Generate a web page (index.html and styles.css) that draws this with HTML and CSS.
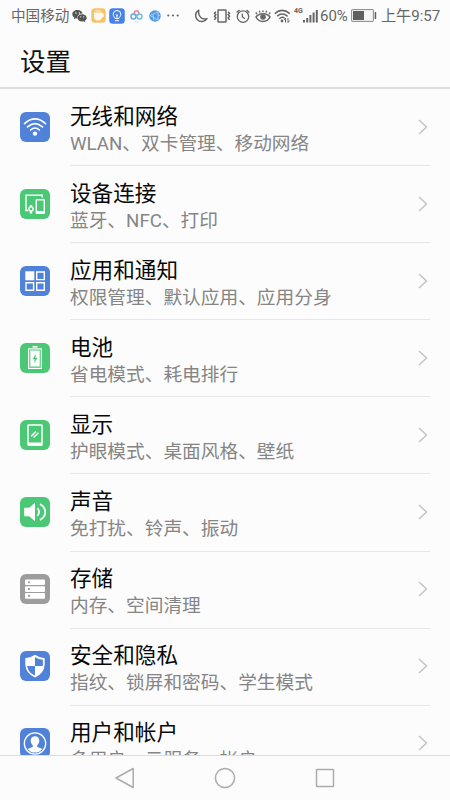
FILE: index.html
```html
<!DOCTYPE html>
<html lang="zh-CN">
<head>
<meta charset="utf-8">
<title>设置</title>
<link rel="stylesheet" href="styles.css">
</head>
<body>
<div class="phone">
  <div class="status">
    <div class="status-left">
      <span class="carrier">中国移动</span>
      <svg class="wechat" width="15" height="14" viewBox="0 0 15 14"><path fill="#555" d="M5.600 1C2.500 1 .3 2.900.3 5.200c0 1.400.8 2.500 2 3.300L1.800 10.200l2-1c.5.1 1.100.2 1.800.2C5 6.700 7 4.600 10.700 4.600 10.200 2.500 8.100 1 5.600 1Z"/><path fill="#555" d="M10.100 5.300c-2.600 0-4.500 1.600-4.500 3.600s1.900 3.600 4.500 3.600c.5 0 1-.1 1.500-.2l1.700.9-.4-1.500c1.100-.7 1.800-1.700 1.800-2.800 0-2-2-3.600-4.600-3.600Z"/><g fill="#fff"><circle cx="3.900" cy="4" r=".7"/><circle cx="7.400" cy="4" r=".7"/><circle cx="8.700" cy="7.800" r=".6"/><circle cx="11.700" cy="7.800" r=".6"/></g></svg>
      <svg class="cup" width="15" height="15" viewBox="0 0 15 15"><rect x=".3" y=".3" width="14.400" height="14.400" rx="3.500" fill="#f5c469"/><path fill="#fffaf0" d="M3 4.500h8v1h.8a1 1 0 0 1 1 1v1.700a1 1 0 0 1-1 1H11c-.3 2-1.700 3.300-4 3.300s-4-1.600-4-4Z"/><path d="M4.500 2.900h5" stroke="#fff3d5"/></svg>
      <svg class="bulb" width="16" height="16" viewBox="0 0 16 16"><rect x=".2" y=".2" width="15.600" height="15.600" rx="3.500" fill="#4583e8"/><path d="M6 10.500c0-1.300-1.800-2-1.800-4.200a3.800 3.800 0 0 1 7.600 0c0 2.200-1.800 2.900-1.800 4.200ZM6 12.700h4M8 10V7M6.800 6.500 8 7.500l1.200-1" fill="none" stroke="#fff" stroke-width="1"/></svg>
      <svg class="knot" width="13" height="14" viewBox="0 0 13 14"><g fill="none" stroke-width="1.500"><circle cx="6.500" cy="4" r="2.300" stroke="#e4889c"/><circle cx="3.500" cy="7.400" r="2.500" stroke="#66a5e3"/><circle cx="9.500" cy="7.400" r="2.500" stroke="#68c4dc"/></g><path d="M4 13h5" stroke="#ddd"/></svg>
      <svg class="globe" width="12" height="12" viewBox="0 0 12 12"><circle cx="6" cy="6" r="5.800" fill="#4f9be4"/><path d="M1 5.500 9 2v8L1 5.500M4 4.500l1 6M9 5l2.500 1" fill="none" stroke="#b9dbf7" stroke-width=".8"/></svg>
      <svg class="dots" width="12" height="3" viewBox="0 0 12 3"><g fill="#666"><circle cx="1.300" cy="1.500" r="1.100"/><circle cx="6" cy="1.500" r="1.100"/><circle cx="10.700" cy="1.500" r="1.100"/></g></svg>
    </div>
    <div class="status-right">
      <svg class="moon" width="14" height="14" viewBox="0 0 14 14"><path d="M4.800 1.200A6.100 6.100 0 1 0 13 9.700C8 11.300 3.500 7 4.800 1.200Z" fill="none" stroke="#666" stroke-width="1.500" stroke-linejoin="round"/></svg>
      <svg class="vibrate" width="18" height="14" viewBox="0 0 18 14"><g fill="none" stroke="#666" stroke-width="1.500"><rect x="5" y="1" width="8" height="12" rx=".6"/><path d="M2.800 2.800 1.500 4.300 2.800 5.800 1.500 7.300l1.300 1.500-1.300 2M15.200 2.800l1.300 1.500-1.300 1.500 1.300 1.500-1.300 1.500 1.300 2"/></g></svg>
      <svg class="alarm" width="14" height="14" viewBox="0 0 14 14"><g fill="none" stroke="#666" stroke-width="1.300"><circle cx="7" cy="7.600" r="5.700"/><path d="M.6 3.500 3.500.9M13.400 3.500 10.500.9M6.300 4.500v3.300l2.500 2"/></g></svg>
      <svg class="eye" width="16" height="14" viewBox="0 0 16 14"><path d="M1 8c3-4.500 11-4.500 14 0-3 6-11 6-14 0ZM2 5 .8 3.500M5 3.500 4.300 1.800M11 3.500l.7-1.700M14 5l1.200-1.500M8 3V1.500" fill="none" stroke="#666" stroke-width="1.500"/><circle cx="8" cy="8" r="2.800" fill="#666"/></svg>
      <svg class="wifi" width="17" height="14" viewBox="0 0 17 14"><g fill="none" stroke="#666" stroke-width="1.500"><path d="M.8 4.600Q8 -1.800 15.800 4.600M3 7.300Q8.200 2.800 13.600 7.300M5.300 9.800Q8.200 7.200 10.500 9"/></g><circle cx="8" cy="12" r="1.400" fill="#666"/><path d="m10 11 1.500-2v4.500M15.500 11.500 14 13.500V9" fill="none" stroke="#666"/></svg>
      <span class="net">4G</span>
      <svg class="signal" width="15" height="14" viewBox="0 0 15 14"><path fill="#666" d="M0 11h2v2.500H0ZM3.200 9h2v4.500h-2ZM6.400 6h2v7.500h-2ZM9.600 3.500h2v10h-2ZM12.800 1h2v12.500h-2Z"/></svg>
      <span class="percent">60%</span>
      <svg class="battery" width="26" height="13" viewBox="0 0 26 13"><rect x=".6" y=".6" width="21.800" height="11.800" rx=".5" fill="#f4f4f4" stroke="#888"/><path fill="#5f5f5f" d="M2 2h11v9H2ZM23.700 3h1.500v7h-1.500Z"/></svg>
      <span class="clock">上午9:57</span>
    </div>
  </div>
  <header class="header"><h1>设置</h1></header>
  <main class="list">
    <section class="row">
      <svg class="icon" viewBox="0 0 30 30"><rect class="blue" width="30" height="30" rx="6"/><g fill="none" stroke="#fff" stroke-width="1.600" stroke-linecap="round"><path d="M4.500 11.600Q15 2.300 25.500 11.600M7.500 14.900Q15 8.200 22.500 14.900M10.600 18Q15 14 19.400 18"/></g><circle cx="15" cy="21.600" r="2.200" fill="#fff"/></svg>
      <div class="body"><div class="text"><h2>无线和网络</h2><p>WLAN、双卡管理、移动网络</p></div><svg class="chevron" viewBox="0 0 10 16"><path d="m1 1 7.500 7L1 15"/></svg></div>
    </section>
    <section class="row">
      <svg class="icon" viewBox="0 0 30 30"><rect class="green" width="30" height="30" rx="6"/><g fill="none" stroke="#fff" stroke-width="1.400"><path d="M8.200 21.500H6V6.300h16.300v2.200"/><rect x="16.300" y="10.800" width="8" height="13.400" rx=".5"/><circle cx="11" cy="20" r="2.100"/></g><path d="M9.800 16h2.400v2H9.800ZM9.800 22h2.400v2.500H9.800ZM16.300 22h8v2.500h-8Z" fill="#fff"/></svg>
      <div class="body"><div class="text"><h2>设备连接</h2><p>蓝牙、NFC、打印</p></div><svg class="chevron" viewBox="0 0 10 16"><path d="m1 1 7.500 7L1 15"/></svg></div>
    </section>
    <section class="row">
      <svg class="icon" viewBox="0 0 30 30"><rect class="blue" width="30" height="30" rx="6"/><path fill="#fff" d="M5.300 5.300h9v9h-9Z"/><path d="M16.700 6h7.600v7.600h-7.600ZM6 16.700h7.600v7.600H6ZM16.700 16.700h7.600v7.600h-7.600Z" fill="none" stroke="#fff" stroke-width="1.400"/></svg>
      <div class="body"><div class="text"><h2>应用和通知</h2><p>权限管理、默认应用、应用分身</p></div><svg class="chevron" viewBox="0 0 10 16"><path d="m1 1 7.500 7L1 15"/></svg></div>
    </section>
    <section class="row">
      <svg class="icon" viewBox="0 0 30 30"><rect class="green" width="30" height="30" rx="6"/><path d="M12.500 3.800h5" stroke="#fff" stroke-width="1.600"/><rect x="8.600" y="5.900" width="12.800" height="19.500" fill="none" stroke="#fff" stroke-width="1.200"/><path fill="#fff" d="M10.300 7.600h9.400v16h-9.400Z"/><path class="green" d="m16 10.800-3.500 5.500h2.200l-.6 4 3.500-5.500h-2.200Z"/></svg>
      <div class="body"><div class="text"><h2>电池</h2><p>省电模式、耗电排行</p></div><svg class="chevron" viewBox="0 0 10 16"><path d="m1 1 7.500 7L1 15"/></svg></div>
    </section>
    <section class="row">
      <svg class="icon" viewBox="0 0 30 30"><rect class="green" width="30" height="30" rx="6"/><rect x="8" y="4.900" width="14" height="20.200" rx=".7" fill="none" stroke="#fff" stroke-width="1.500"/><path fill="#fff" d="M8 22.500h14V26H8Z"/><path d="m11.200 16.200 4.600-4.600M13.600 17.500l4.800-4.800" stroke="#fff" stroke-width="1.400"/></svg>
      <div class="body"><div class="text"><h2>显示</h2><p>护眼模式、桌面风格、壁纸</p></div><svg class="chevron" viewBox="0 0 10 16"><path d="m1 1 7.500 7L1 15"/></svg></div>
    </section>
    <section class="row">
      <svg class="icon" viewBox="0 0 30 30"><rect class="green" width="30" height="30" rx="6"/><path fill="#fff" d="M4.200 10.800h5L15 5.800v18.400l-5.800-5h-5Z"/><path d="M17.300 11.200q3.600 3.800 0 7.600M20 7c7 4 7 12 0 16" fill="none" stroke="#fff" stroke-width="1.700"/></svg>
      <div class="body"><div class="text"><h2>声音</h2><p>免打扰、铃声、振动</p></div><svg class="chevron" viewBox="0 0 10 16"><path d="m1 1 7.500 7L1 15"/></svg></div>
    </section>
    <section class="row">
      <svg class="icon" viewBox="0 0 30 30"><rect class="gray" width="30" height="30" rx="6"/><g fill="#fff"><rect x="5" y="5.500" width="20" height="5.600" rx="1"/><rect x="5" y="12.300" width="20" height="5.600" rx="1"/><rect x="5" y="19.100" width="20" height="5.600" rx="1"/></g><g class="gray"><circle cx="9" cy="8.300" r="1.100"/><circle cx="9" cy="15.100" r="1.100"/><circle cx="9" cy="21.900" r="1.100"/></g></svg>
      <div class="body"><div class="text"><h2>存储</h2><p>内存、空间清理</p></div><svg class="chevron" viewBox="0 0 10 16"><path d="m1 1 7.500 7L1 15"/></svg></div>
    </section>
    <section class="row">
      <svg class="icon" viewBox="0 0 30 30"><rect class="blue" width="30" height="30" rx="6"/><path fill="#fff" d="M15 3.800Q19.500 7 24.700 7.200V13.500Q24.200 22.500 15 26.500 5.800 22.500 5.300 13.500V7.200Q10.500 7 15 3.800Z"/><path class="blue" d="M15 15H7.100Q8 21.500 15 24.500ZM15 15V6Q18.500 8.500 22.900 8.800V13.500L22.700 15Z"/></svg>
      <div class="body"><div class="text"><h2>安全和隐私</h2><p>指纹、锁屏和密码、学生模式</p></div><svg class="chevron" viewBox="0 0 10 16"><path d="m1 1 7.500 7L1 15"/></svg></div>
    </section>
    <section class="row">
      <svg class="icon" viewBox="0 0 30 30"><rect class="blue" width="30" height="30" rx="6"/><circle cx="15" cy="15.500" r="10.700" fill="none" stroke="#fff" stroke-width="1.300"/><path fill="#fff" d="M15 8.200c-2.700 0-4.300 1.800-4.300 4.300 0 2 .8 3.700 2.100 4.700v1.500c-1 .9-3 1.200-5 2.200 1.600 2.300 4.300 3.700 7.200 3.700s5.600-1.400 7.200-3.700c-2-1-4-1.300-5-2.200v-1.500c1.300-1 2.100-2.700 2.100-4.700 0-2.500-1.600-4.300-4.300-4.300Z"/></svg>
      <div class="body"><div class="text"><h2>用户和帐户</h2><p>多用户、云服务、帐户</p></div><svg class="chevron" viewBox="0 0 10 16"><path d="m1 1 7.500 7L1 15"/></svg></div>
    </section>
  </main>
  <nav class="nav">
    <svg viewBox="0 0 22 22"><path d="M19.200 1.500v19L2 11Z"/></svg>
    <svg viewBox="0 0 22 22"><circle cx="11" cy="11" r="9.600"/></svg>
    <svg viewBox="0 0 22 22"><rect x="2.500" y="2.500" width="17" height="17" rx=".5"/></svg>
  </nav>
</div>
</body>
</html>
```
FILE: styles.css
```css
* { box-sizing: border-box; margin: 0; }

body {
  background: #fcfcfc;
  font-family: Roboto, "Noto Sans CJK SC", sans-serif;
}

svg { display: block; flex: none; }

.phone {
  display: flex;
  flex-direction: column;
  width: 450px;
  height: 800px;
  overflow: hidden;
}

.status {
  display: flex;
  justify-content: space-between;
  height: 31px;
  padding: 0 10px 0 11px;
  color: #666;
  font-size: 14.6px;
  line-height: 31px;
  white-space: nowrap;
}

.status-left, .status-right { display: flex; align-items: center; }
.carrier { width: 61px; padding-top: 1px; }
.cup { margin-left: 4px; }
.bulb { margin-left: 3px; }
.knot { margin-left: 5px; }
.globe { margin-left: 6px; }
.dots { margin-left: 6px; }
.vibrate { margin-left: 5px; }
.alarm { margin-left: 5px; }
.eye { margin-left: 5px; }
.wifi { margin-left: 3px; }
.net {
  width: 9px;
  margin: -8px 0 0 3px;
  font-size: 7px;
  font-weight: 700;
}
.percent { width: 31px; margin-left: 2px; padding-top: 1px; font-size: 15px; }
.clock { width: 59px; margin-left: 4px; padding-top: 1px; font-size: 15.100px; }

.header {
  height: 58px;
  padding: 13px 20px 0;
  border-bottom: 2px solid #dedede;
}

h1 {
  color: #111;
  font-size: 25.500px;
  font-weight: 400;
  line-height: 37px;
}

.list { flex: 1; min-height: 0; overflow: hidden; }

.row {
  display: flex;
  height: 77.1px;
  padding: 0 20px;
}

.icon { width: 30px; height: 30px; margin: 22.500px 20px 0 0; }
.blue { fill: #5182d9; }
.green { fill: #4bc876; }
.gray { fill: #9d9d9d; }

.body {
  display: flex;
  flex: 1;
  justify-content: space-between;
  border-bottom: 1px solid #e6e6e6;
}

.text { padding-top: 13.500px; white-space: nowrap; }

h2 {
  color: #080808;
  font-size: 21.600px;
  font-weight: 400;
  line-height: 27px;
}

p {
  color: #858585;
  font-size: 18.700px;
  line-height: 28px;
}

.chevron { width: 10px; height: 16px; margin: 29.500px 2px 0 0; }
.chevron path { fill: none; stroke: #c4c4c4; stroke-width: 1.500; }

.nav {
  display: flex;
  justify-content: center;
  gap: 78px;
  height: 45px;
  padding-top: 11px;
  border-top: 1px solid #dcdcdc;
}

.nav svg { width: 22px; height: 22px; fill: none; stroke: #acacac; stroke-width: 1.500; stroke-linejoin: round; }
```
